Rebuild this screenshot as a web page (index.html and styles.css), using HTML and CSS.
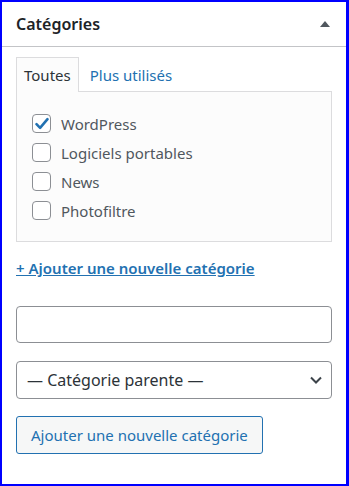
FILE: index.html
```html
<!doctype html>
<html>
  <head>
    <title>Catégories</title>
    <link rel="stylesheet" href="styles.css">
  </head>
  <body>
    <div class="box">
      <div class="box-head">
        <h2>Catégories</h2>
        <span class="toggle"></span>
      </div>
      <div class="box-body">
        <ul class="tabs">
          <li class="tab active">Toutes</li>
          <li class="tab">Plus utilisés</li>
        </ul>
        <div class="panel">
          <label class="row"><span class="check checked">
            <svg width="16" height="16" viewBox="0 0 16 16"><path d="M2.5 8.2l3.6 3.6 7.4-8.6" fill="none" stroke="#2271b1" stroke-width="2.6" stroke-linecap="round" stroke-linejoin="round"/></svg>
          </span>WordPress</label>
          <label class="row"><span class="check"></span>Logiciels portables</label>
          <label class="row"><span class="check"></span>News</label>
          <label class="row"><span class="check"></span>Photofiltre</label>
        </div>
        <a class="add-link" href="#">+ Ajouter une nouvelle catégorie</a>
        <input class="field" type="text">
        <div class="select">
          <span>— Catégorie parente —</span>
          <svg width="14" height="14" viewBox="0 0 14 14"><path d="M2 4.5l5 5 5-5" fill="none" stroke="#3c434a" stroke-width="2"/></svg>
        </div>
        <button class="button">Ajouter une nouvelle catégorie</button>
      </div>
    </div>
  </body>
</html>
```

FILE: styles.css
```css
body {
  margin: 0;
  font-family: "Noto Sans", "Open Sans", sans-serif;
  color: #3c434a;
}

.box {
  width: 349px;
  height: 486px;
  box-sizing: border-box;
  border: solid #0000ff;
  border-width: 2px 3px 2px 2px;
  background: #fff;
}

.box-head {
  height: 44px;
  border-bottom: 1px solid #c3c4c7;
  display: flex;
  align-items: center;
  justify-content: space-between;
  padding: 0 14px;
}

.box-head h2 {
  margin: 0;
  font-size: 16px;
  font-weight: 600;
  color: #1d2327;
}

.toggle {
  width: 0;
  height: 0;
  border-left: 5px solid transparent;
  border-right: 5px solid transparent;
  border-bottom: 6px solid #50575e;
  margin-right: 2px;
}

.box-body {
  padding: 10px 14px 0;
}

.tabs {
  list-style: none;
  margin: 0;
  padding: 0;
  display: flex;
  font-size: 15px;
}

.tab {
  height: 34px;
  box-sizing: border-box;
  padding: 0 7px;
  display: flex;
  align-items: center;
  color: #2271b1;
  border: 1px solid transparent;
  border-bottom: none;
  margin-right: 3px;
}

.tab.active {
  color: #2c3338;
  background: #fcfcfc;
  border-color: #dcdcde;
  margin-bottom: -1px;
  height: 35px;
  position: relative;
}

.panel {
  border: 1px solid #dcdcde;
  background: #fcfcfc;
  padding: 22px 15px 21px;
  display: flex;
  flex-direction: column;
  gap: 10px;
}

.row {
  display: flex;
  align-items: center;
  gap: 10px;
  font-size: 15px;
  color: #50575e;
  height: 19px;
}

.check {
  width: 19px;
  height: 19px;
  box-sizing: border-box;
  border: 1px solid #8c8f94;
  border-radius: 4px;
  background: #fff;
  display: flex;
  align-items: center;
  justify-content: center;
}

.add-link {
  display: block;
  margin-top: 15px;
  font-size: 15px;
  font-weight: 600;
  color: #2271b1;
  line-height: 22px;
}

.field {
  display: block;
  width: 100%;
  height: 37px;
  box-sizing: border-box;
  margin-top: 27px;
  border: 1px solid #8c8f94;
  border-radius: 4px;
  background: #fff;
}

.select {
  margin-top: 18px;
  height: 38px;
  box-sizing: border-box;
  border: 1px solid #8c8f94;
  border-radius: 4px;
  display: flex;
  align-items: center;
  justify-content: space-between;
  padding: 0 8px 0 10px;
  font-size: 16px;
  color: #2c3338;
}

.button {
  margin-top: 17px;
  height: 38px;
  padding: 0 14px;
  font-family: inherit;
  font-size: 15px;
  color: #2271b1;
  background: #f6f7f7;
  border: 1px solid #2271b1;
  border-radius: 3px;
}
```
